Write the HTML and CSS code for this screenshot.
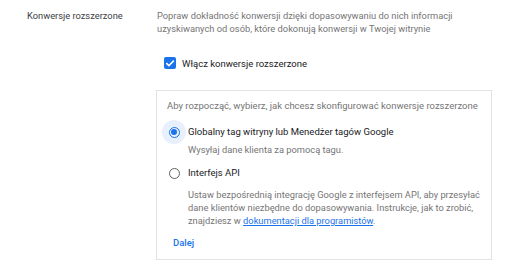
FILE: index.html
```html
<!DOCTYPE html>
<html lang="pl">
<head>
<meta charset="utf-8">
<link rel="stylesheet" href="styles.css">
</head>
<body>
<div class="row">
  <div class="label">Konwersje rozszerzone</div>
  <div class="content">
    <p class="desc">Popraw dokładność konwersji dzięki dopasowywaniu do nich informacji uzyskiwanych od osób, które dokonują konwersji w Twojej witrynie</p>
    <div class="check-row">
      <span class="checkbox"><svg viewBox="0 0 12 12" width="12" height="12"><path d="M2.3 6.2 L4.9 8.7 L9.8 3.6" fill="none" stroke="#fff" stroke-width="1.6"/></svg></span>
      <span class="check-label">Włącz konwersje rozszerzone</span>
    </div>
    <div class="card">
      <p class="card-intro">Aby rozpocząć, wybierz, jak chcesz skonfigurować konwersje rozszerzone</p>
      <div class="option first">
        <span class="radio-wrap selected"><span class="radio"><span class="dot"></span></span></span>
        <div class="option-text">
          <div class="option-title">Globalny tag witryny lub Menedżer tagów Google</div>
          <div class="option-desc">Wysyłaj dane klienta za pomocą tagu.</div>
        </div>
      </div>
      <div class="option second">
        <span class="radio-wrap"><span class="radio"></span></span>
        <div class="option-text">
          <div class="option-title">Interfejs API</div>
          <div class="option-desc">Ustaw bezpośrednią integrację Google z interfejsem API, aby przesyłać dane klientów niezbędne do dopasowywania. Instrukcje, jak to zrobić, znajdziesz w <a class="link" href="#">dokumentacji dla programistów</a>.</div>
        </div>
      </div>
      <div class="actions"><span class="btn">Dalej</span></div>
    </div>
  </div>
</div>
</body>
</html>
```
FILE: styles.css
```css
html, body {
  margin: 0;
  padding: 0;
  background: #fff;
}
body {
  font-family: Roboto, "Noto Sans", Arial, sans-serif;
  font-size: 9.5px;
  line-height: 13px;
  color: #3c4043;
}
.row {
  display: flex;
  padding: 9px 0 0 27px;
}
.label {
  width: 129px;
  flex: none;
  font-size: 9.3px;
  color: #3c4043;
}
.content {
  width: 336px;
  flex: none;
}
.desc {
  margin: 0;
  padding-left: 1px;
  color: #757575;
  font-size: 9.3px;
}
.check-row {
  display: flex;
  align-items: center;
  margin: 21px 0 0 8px;
  height: 14px;
}
.checkbox {
  width: 12px;
  height: 12px;
  border-radius: 2px;
  background: #1a73e8;
  display: flex;
  align-items: center;
  justify-content: center;
  margin-right: 6px;
}
.checkbox svg { display: block; }
.check-label {
  color: #202124;
}
.card {
  margin-top: 20px;
  border: 1px solid #e3e3e3;
  padding: 8px 10px 10px 10px;
}
.card-intro {
  margin: 0 0 13px 0;
  color: #757575;
}
.option {
  display: flex;
  align-items: flex-start;
}
.option.first {
  margin-bottom: 10px;
}
.radio-wrap {
  width: 24px;
  height: 24px;
  margin: -5px 0 0 -5px;
  border-radius: 50%;
  display: flex;
  align-items: center;
  justify-content: center;
  flex: none;
}
.radio-wrap.selected {
  background: #e8f0fe;
}
.radio {
  width: 9px;
  height: 9px;
  border: 1.5px solid #5f6368;
  border-radius: 50%;
  display: flex;
  align-items: center;
  justify-content: center;
}
.selected .radio {
  border-color: #1a73e8;
}
.dot {
  width: 6px;
  height: 6px;
  border-radius: 50%;
  background: #1a73e8;
}
.option-text {
  margin-left: 2px;
}
.option-title {
  color: #202124;
}
.option-desc {
  margin-top: 5px;
  color: #757575;
  font-size: 9.3px;
  width: 300px;
}
.second .option-desc {
  margin-top: 9px;
}
.link {
  color: #1a73e8;
  text-decoration: underline;
}
.actions {
  margin-top: 9px;
  padding-left: 6px;
}
.btn {
  color: #1a73e8;
  font-weight: 500;
}
```
